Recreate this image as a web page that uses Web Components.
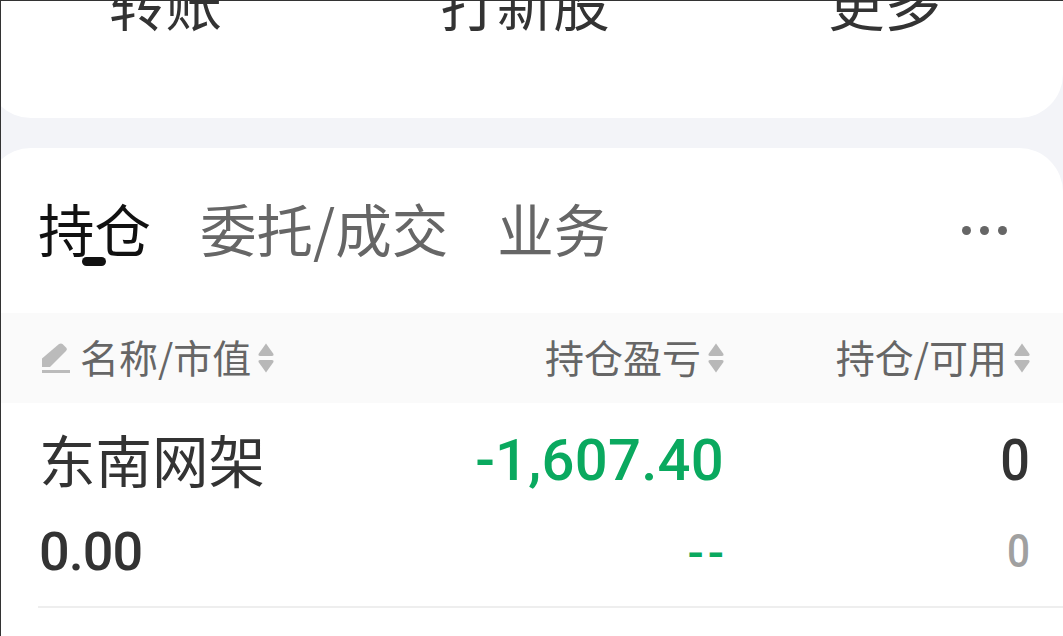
<!DOCTYPE html>
<html>
<head>
<meta charset="utf-8">
<style>
  html, body { margin: 0; padding: 0; height: 100%; }
  body { overflow: hidden; font-family: "Noto Sans CJK SC", "Noto Sans", sans-serif; }
</style>
</head>
<body>
<app-frame>
  <shortcut-card>
    <span>转账</span>
    <span>打新股</span>
    <span>更多</span>
  </shortcut-card>
  <holdings-card>
    <tab-bar></tab-bar>
    <table-head></table-head>
    <holding-row name="东南网架" value="0.00" profit="-1,607.40" ratio="--" qty="0" avail="0"></holding-row>
  </holdings-card>
</app-frame>

<script>
class AppFrame extends HTMLElement {
  constructor() {
    super();
    this.attachShadow({ mode: "open" });
    this.shadowRoot.innerHTML = `
      <style>
        :host {
          display: flex;
          flex-direction: column;
          gap: 30px;
          height: 636px;
          box-sizing: border-box;
          overflow: hidden;
          background: #f3f4f8;
          border-top: 1px solid #333;
          border-left: 1px solid #333;
        }
      </style>
      <slot></slot>
    `;
  }
}
customElements.define("app-frame", AppFrame);

class ShortcutCard extends HTMLElement {
  constructor() {
    super();
    this.attachShadow({ mode: "open" });
    this.shadowRoot.innerHTML = `
      <style>
        :host {
          display: flex;
          justify-content: space-between;
          align-items: flex-start;
          flex: none;
          height: 117px;
          margin-left: -14px;
          box-sizing: border-box;
          padding: 0 122px 0 122px;
          overflow: hidden;
          background: #fff;
          border-radius: 0 0 44px 44px;
          font-size: 56.5px;
          line-height: 60px;
          color: #333;
        }
        ::slotted(span) { margin-top: -30px; }
      </style>
      <slot></slot>
    `;
  }
}
customElements.define("shortcut-card", ShortcutCard);

class HoldingsCard extends HTMLElement {
  constructor() {
    super();
    this.attachShadow({ mode: "open" });
    this.shadowRoot.innerHTML = `
      <style>
        :host {
          display: flex;
          flex-direction: column;
          flex: 1;
          margin-left: -14px;
          background: #fff;
          border-radius: 44px 44px 0 0;
        }
      </style>
      <slot></slot>
    `;
  }
}
customElements.define("holdings-card", HoldingsCard);

class TabBar extends HTMLElement {
  constructor() {
    super();
    this.attachShadow({ mode: "open" });
    this.shadowRoot.innerHTML = `
      <style>
        :host {
          display: flex;
          align-items: center;
          height: 165px;
          box-sizing: border-box;
          padding: 0 56px 0 51px;
          font-size: 56.5px;
          line-height: 60px;
          color: #666;
          gap: 49px;
        }
        .tab { position: relative; margin-top: -7px; }
        .active { color: #111; }
        .active::after {
          content: "";
          position: absolute;
          left: 44px;
          bottom: -9px;
          width: 24px;
          height: 9px;
          border-radius: 5px;
          background: #111;
        }
        .more { margin-left: auto; display: flex; gap: 9px; margin-top: -1px; }
        .more i { width: 9px; height: 9px; border-radius: 50%; background: #666; }
      </style>
      <span class="tab active">持仓</span>
      <span class="tab">委托/成交</span>
      <span class="tab">业务</span>
      <span class="more"><i></i><i></i><i></i></span>
    `;
  }
}
customElements.define("tab-bar", TabBar);

class SortIcon extends HTMLElement {
  constructor() {
    super();
    this.attachShadow({ mode: "open" });
    this.shadowRoot.innerHTML = `
      <style>
        :host { display: block; width: 16px; height: 30px; margin-left: 7px; }
        svg { display: block; }
      </style>
      <svg width="16" height="30" viewBox="0 0 16 30" fill="#b8b8b8">
        <path d="M8 0.5 L15.5 11 Q16 13 14 13 H2 Q0 13 0.5 11 Z"/>
        <path d="M8 29.5 L15.5 19 Q16 17 14 17 H2 Q0 17 0.5 19 Z"/>
      </svg>
    `;
  }
}
customElements.define("sort-icon", SortIcon);

class TableHead extends HTMLElement {
  constructor() {
    super();
    this.attachShadow({ mode: "open" });
    this.shadowRoot.innerHTML = `
      <style>
        :host {
          display: grid;
          grid-template-columns: 1fr 306px 306px;
          align-items: center;
          height: 90px;
          box-sizing: border-box;
          padding: 0 33px 0 55px;
          background: #fafafa;
          color: #666;
          font-size: 39px;
          line-height: 50px;
        }
        .cell { display: flex; align-items: center; justify-content: flex-end; }
        .cell.first { justify-content: flex-start; }
        .cell span { margin-top: -4px; }
        svg { display: block; margin-right: 10px; }
      </style>
      <div class="cell first">
        <svg width="28" height="31" viewBox="0 0 28 31" fill="#bbb">
          <path d="M0 24 V15.5 L17 1 Q19 0 20.5 1 L24.5 5 Q25.5 6.5 24 8 L8 24 Z"/>
          <rect x="0" y="27" width="28" height="3"/>
        </svg>
        <span>名称/市值</span><sort-icon></sort-icon>
      </div>
      <div class="cell"><span>持仓盈亏</span><sort-icon></sort-icon></div>
      <div class="cell"><span>持仓/可用</span><sort-icon></sort-icon></div>
    `;
  }
}
customElements.define("table-head", TableHead);

class HoldingRow extends HTMLElement {
  constructor() {
    super();
    this.attachShadow({ mode: "open" });
    this.shadowRoot.innerHTML = `
      <style>
        :host {
          display: grid;
          grid-template-columns: 1fr 306px 306px;
          grid-template-rows: 90px 92px;
          margin-left: 51px;
          padding: 12px 33px 9px 2px;
          border-bottom: 2px solid #eee;
          color: #333;
          font-family: Roboto, "Noto Sans", sans-serif;
        }
        div { display: flex; align-items: center; justify-content: flex-end; white-space: nowrap; }
        .name { justify-content: flex-start; font: 400 56.5px/60px "Noto Sans CJK SC", sans-serif; margin: -5px 0 0 -1px; }
        .num { font-size: 58px; font-weight: 500; }
        .profit { letter-spacing: .25px; }
        .value { justify-content: flex-start; font-size: 54px; font-weight: 500; letter-spacing: -1px; margin-left: -1px; }
        .green { color: #0aa95f; }
        .ratio { font-size: 48px; font-weight: 500; letter-spacing: 4px; margin: 3px -4px 0 0; }
        .avail { font-size: 46px; font-weight: 500; transform: scaleX(.88); transform-origin: right center; }
        .qty { transform: scaleX(.9); transform-origin: right center; }
        .grey { color: #a0a0a0; }
      </style>
      <div class="name"></div>
      <div class="num green profit"></div>
      <div class="num qty"></div>
      <div class="value"></div>
      <div class="green ratio"></div>
      <div class="grey avail"></div>
    `;
    const root = this.shadowRoot;
    root.querySelector(".name").textContent = this.getAttribute("name");
    root.querySelector(".value").textContent = this.getAttribute("value");
    root.querySelector(".profit").textContent = this.getAttribute("profit");
    root.querySelector(".ratio").textContent = this.getAttribute("ratio");
    root.querySelector(".qty").textContent = this.getAttribute("qty");
    root.querySelector(".avail").textContent = this.getAttribute("avail");
  }
}
customElements.define("holding-row", HoldingRow);
</script>
</body>
</html>
